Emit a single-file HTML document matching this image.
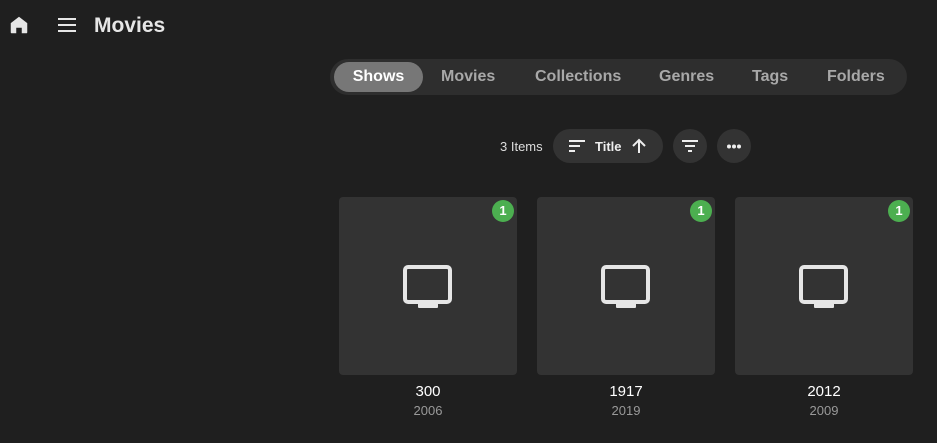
<!DOCTYPE html>
<html><head><style>
body{margin:0;width:937px;height:443px;background:#1f1f1f;font-family:"Liberation Sans",sans-serif;position:relative;overflow:hidden;color:#eee}
.a{position:absolute}
.tabs{left:330px;top:59px;width:577px;height:36px;background:#2e2e2e;border-radius:18px}
.tab{position:absolute;top:0;height:36px;line-height:36px;font-size:16px;font-weight:bold;color:#a8a8a8}
.pill{left:4px;top:3px;width:89px;height:30px;line-height:30px;background:#777;border-radius:15px;color:#fff;text-align:center}
.card{top:197px;width:178px;height:178px;background:#333;border-radius:4px}
.badge{position:absolute;right:3px;top:3px;width:22px;height:22px;border-radius:11px;background:#4caf50;color:#fff;font-size:13px;font-weight:bold;text-align:center;line-height:22px}
.t{top:383px;width:178px;text-align:center;font-size:15px;color:#fff}
.y{top:403px;width:178px;text-align:center;font-size:13px;color:#999}
.btn{background:#333;border-radius:17px;height:34px;top:129px}
</style></head><body>
<svg class="a" style="left:8px;top:14px" width="22" height="22" viewBox="0 0 24 24"><path fill="#e6e6e6" d="M12 3L3 10v10a1 1 0 001 1h5v-6h6v6h5a1 1 0 001-1V10z"/></svg>
<svg class="a" style="left:56px;top:15px" width="22" height="20" viewBox="0 0 22 20"><path stroke="#e6e6e6" stroke-width="2" d="M2 4h18M2 10h18M2 16h18"/></svg>
<div class="a" style="left:94px;top:14px;font-size:21px;font-weight:bold;color:#e6e6e6">Movies</div>
<div class="a tabs">
<div class="tab pill">Shows</div>
<div class="tab" style="left:111px">Movies</div>
<div class="tab" style="left:205px">Collections</div>
<div class="tab" style="left:329px">Genres</div>
<div class="tab" style="left:422px">Tags</div>
<div class="tab" style="left:497px">Folders</div>
</div>
<div class="a" style="left:500px;top:139px;font-size:13px;color:#ddd">3 Items</div>
<div class="a btn" style="left:553px;width:110px">
<svg class="a" style="left:16px;top:11px" width="16" height="13" viewBox="0 0 16 13"><path stroke="#eee" stroke-width="2" d="M0 1h16M0 6h11M0 11h6"/></svg>
<div class="a" style="left:42px;top:10px;font-size:13px;font-weight:bold;color:#eee">Title</div>
<svg class="a" style="left:78px;top:9px" width="16" height="16" viewBox="0 0 16 16"><path stroke="#eee" stroke-width="2" fill="none" d="M8 15V2M2 8l6-6 6 6"/></svg>
</div>
<div class="a btn" style="left:673px;width:34px">
<svg class="a" style="left:9px;top:11px" width="16" height="13" viewBox="0 0 16 13"><path stroke="#eee" stroke-width="2" d="M0 1h16M3 6h10M6 11h4"/></svg></div>
<div class="a btn" style="left:717px;width:34px">
<svg class="a" style="left:9px;top:15px" width="16" height="5" viewBox="0 0 16 5"><circle cx="3" cy="2.5" r="2" fill="#eee"/><circle cx="8" cy="2.5" r="2" fill="#eee"/><circle cx="13" cy="2.5" r="2" fill="#eee"/></svg></div>

<div class="a card" style="left:339px"><div class="badge">1</div><svg class="a" style="left:64px;top:68px" width="50" height="44" viewBox="0 0 50 44"><rect x="2" y="2" width="45" height="35" rx="3" fill="none" stroke="#e6e6e6" stroke-width="4"/><rect x="15" y="36" width="20" height="7" rx="1" fill="#e6e6e6"/></svg></div>
<div class="a card" style="left:537px"><div class="badge">1</div><svg class="a" style="left:64px;top:68px" width="50" height="44" viewBox="0 0 50 44"><rect x="2" y="2" width="45" height="35" rx="3" fill="none" stroke="#e6e6e6" stroke-width="4"/><rect x="15" y="36" width="20" height="7" rx="1" fill="#e6e6e6"/></svg></div>
<div class="a card" style="left:735px"><div class="badge">1</div><svg class="a" style="left:64px;top:68px" width="50" height="44" viewBox="0 0 50 44"><rect x="2" y="2" width="45" height="35" rx="3" fill="none" stroke="#e6e6e6" stroke-width="4"/><rect x="15" y="36" width="20" height="7" rx="1" fill="#e6e6e6"/></svg></div>
<div class="a t" style="left:339px">300</div><div class="a y" style="left:339px">2006</div>
<div class="a t" style="left:537px">1917</div><div class="a y" style="left:537px">2019</div>
<div class="a t" style="left:735px">2012</div><div class="a y" style="left:735px">2009</div>
</body></html>
